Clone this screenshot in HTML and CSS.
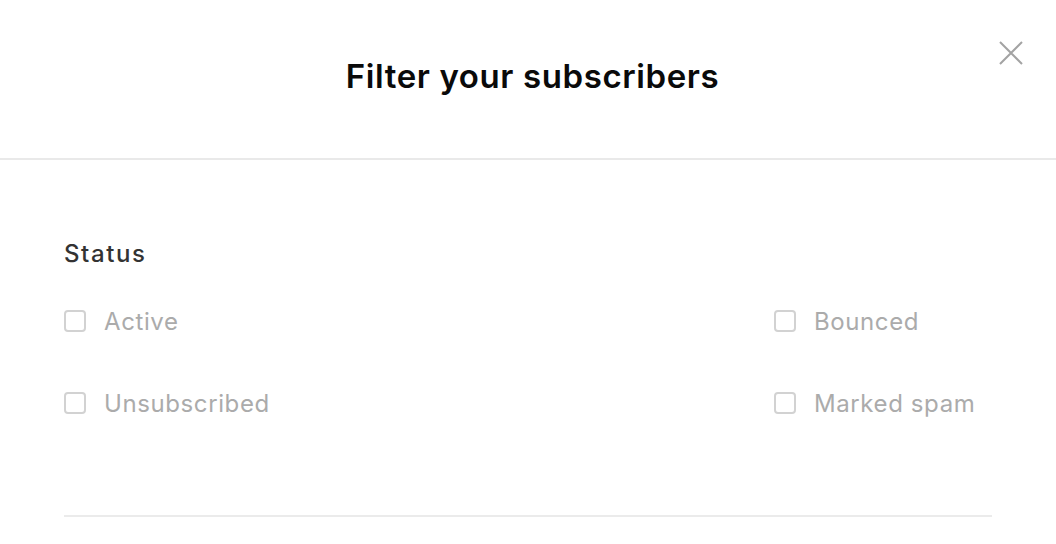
FILE: index.html
```html
<!DOCTYPE html>
<html lang="en">
<head>
<meta charset="utf-8">
<title>Filter your subscribers</title>
<link rel="stylesheet" href="styles.css">
</head>
<body>
<div class="modal">
  <header class="modal-header">
    <h1 class="modal-title">Filter your subscribers</h1>
    <button class="close-btn" aria-label="Close">
      <svg width="26" height="26" viewBox="0 0 26 26"><path d="M2 2 L24 24 M24 2 L2 24" stroke="#a3a3a3" stroke-width="2" fill="none"/></svg>
    </button>
  </header>
  <section class="modal-body">
    <h2 class="section-title">Status</h2>
    <div class="options">
      <label class="option"><span class="box"></span><span class="label">Active</span></label>
      <label class="option"><span class="box"></span><span class="label">Bounced</span></label>
      <label class="option"><span class="box"></span><span class="label">Unsubscribed</span></label>
      <label class="option"><span class="box"></span><span class="label">Marked spam</span></label>
    </div>
    <div class="divider"></div>
  </section>
</div>
</body>
</html>
```
FILE: styles.css
```css
html, body {
  margin: 0;
  padding: 0;
  background: #fff;
}
body {
  font-family: Inter, "Liberation Sans", Arial, sans-serif;
  color: #111;
}
.modal {
  position: relative;
  width: 1056px;
  height: 544px;
  overflow: hidden;
}
.modal-header {
  position: relative;
  height: 158px;
  border-bottom: 2px solid #e9e9e9;
  display: flex;
  align-items: center;
  justify-content: center;
}
.modal-title {
  margin: 0;
  font-size: 33px;
  font-weight: 600;
  letter-spacing: 0.6px;
  color: #0a0a0a;
  padding: 0 0 6px 9px;
}
.close-btn {
  position: absolute;
  top: 40px;
  right: 32px;
  width: 26px;
  height: 26px;
  padding: 0;
  border: 0;
  background: none;
  cursor: pointer;
}
.close-btn svg { display: block; }
.modal-body {
  padding: 79px 64px 0;
}
.section-title {
  margin: 0;
  font-size: 24px;
  font-weight: 500;
  letter-spacing: 1.6px;
  color: #333;
  line-height: 30px;
}
.options {
  margin-top: 40px;
  display: grid;
  grid-template-columns: 1fr 218px;
  row-gap: 58px;
}
.option {
  display: flex;
  align-items: center;
  gap: 18px;
  height: 24px;
}
.box {
  width: 18px;
  height: 18px;
  border: 2px solid #d2d2d2;
  border-radius: 4px;
  flex: none;
}
.label {
  font-size: 24px;
  letter-spacing: 0.6px;
  color: #ababab;
}
.divider {
  margin-top: 100px;
  height: 2px;
  background: #ebebeb;
}
```
